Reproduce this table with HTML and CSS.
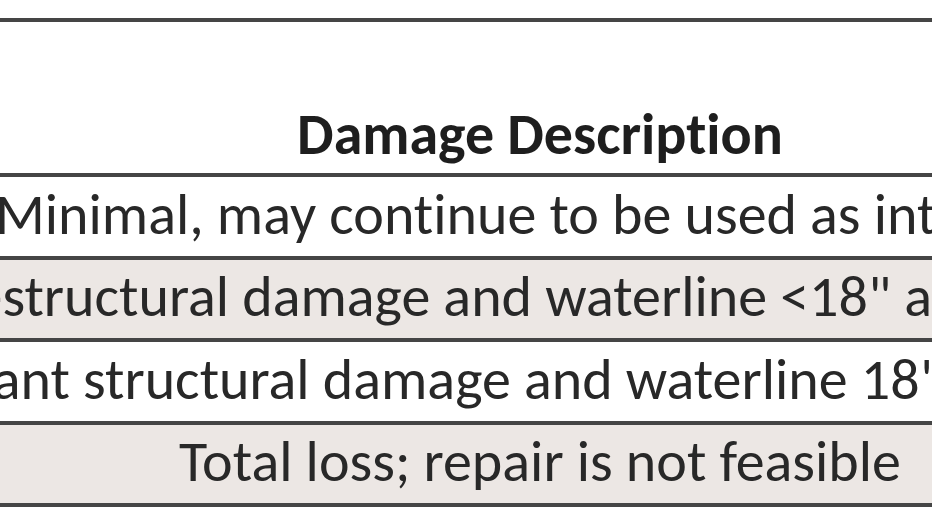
FILE: index.html
```html
<!DOCTYPE html>
<html lang="en">
<head>
<meta charset="utf-8">
<title>Damage Description</title>
<link rel="stylesheet" href="styles.css">
</head>
<body>
<div class="sheet">
  <div class="head"><span class="cell">Damage Description</span></div>
  <div class="row"><span class="cell">Minimal, may continue to be used as intended</span></div>
  <div class="row alt"><span class="cell">Non-structural damage and waterline &lt;18" above grade</span></div>
  <div class="row"><span class="cell">Significant structural damage and waterline 18"+ above floor</span></div>
  <div class="row alt last"><span class="cell">Total loss; repair is not feasible</span></div>
</div>
</body>
</html>
```

FILE: styles.css
```css
html, body {
  margin: 0;
  padding: 0;
  background: #ffffff;
  overflow: hidden;
}

.sheet {
  width: 1080px;
  padding-top: 18px;
  font-family: Carlito, Calibri, "Open Sans", sans-serif;
  font-size: 58px;
  font-variant-ligatures: none;
  font-feature-settings: "liga" 0, "clig" 0;
  color: #282828;
  filter: blur(0.6px);
}

.head,
.row {
  display: flex;
  justify-content: center;
  border-top: 4px solid #454545;
  white-space: nowrap;
}

.head {
  height: 151px;
  align-items: flex-end;
}

.head .cell {
  font-weight: bold;
  color: #1e1e1e;
  padding-bottom: 9px;
}

.row {
  height: 78.5px;
  align-items: center;
}

.row .cell {
  padding-bottom: 3px;
}

.cell {
  flex: none;
  line-height: 58px;
}

.alt {
  background: #ece7e4;
}

.last {
  border-bottom: 4px solid #454545;
}
```
